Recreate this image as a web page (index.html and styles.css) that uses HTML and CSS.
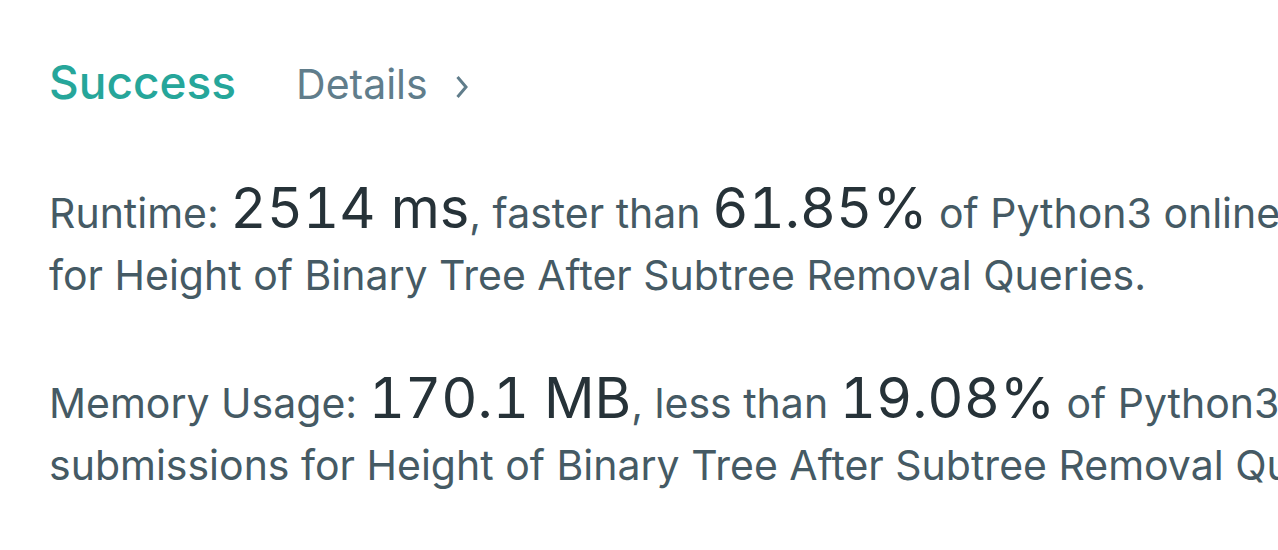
FILE: index.html
```html
<!DOCTYPE html>
<html lang="en">
<head>
<meta charset="utf-8">
<title>Submission result</title>
<link rel="stylesheet" href="styles.css">
</head>
<body>
<div class="viewport">
  <div class="result">
    <div class="result-head">
      <span class="status">Success</span>
      <a class="details" href="#">Details
        <svg class="chevron" viewBox="0 0 14 24" width="14" height="24" aria-hidden="true">
          <path d="M2.5 2 L11 12 L2.5 22" fill="none" stroke="currentColor" stroke-width="3" stroke-linecap="butt" stroke-linejoin="miter"/>
        </svg>
      </a>
    </div>
    <p class="stat">Runtime: <span class="num">2514 ms</span>, faster than <span class="num">61.85%</span> of Python3 online submissions for Height of Binary Tree After Subtree Removal Queries.</p>
    <p class="stat">Memory Usage: <span class="num">170.1 MB</span>, less than <span class="num">19.08%</span> of Python3 online submissions for Height of Binary Tree After Subtree Removal Queries.</p>
  </div>
</div>
</body>
</html>
```

FILE: styles.css
```css
html, body {
  margin: 0;
  padding: 0;
  background: #ffffff;
}

.viewport {
  width: 100%;
  height: 550px;
  overflow: hidden;
}

.result {
  width: 1525px;
  padding: 52px 0 0 49px;
  font-family: Inter, "Noto Sans", sans-serif;
}

.result-head {
  display: flex;
  align-items: baseline;
  gap: 60px;
  height: 72px;
  margin-bottom: 58px;
}

.status {
  font-size: 46px;
  line-height: 60px;
  font-weight: 500;
  color: #26a69a;
}

.details {
  display: flex;
  align-items: baseline;
  gap: 27px;
  font-size: 41px;
  line-height: 60px;
  color: #607d8b;
  text-decoration: none;
}

.chevron {
  align-self: center;
  margin-top: 6px;
}

.stat {
  margin: 0 0 66px;
  font-size: 41px;
  line-height: 62px;
  color: #455a64;
}

.num {
  font-size: 56px;
  line-height: 40px;
  font-variant-numeric: tabular-nums;
  color: #263238;
}
```
